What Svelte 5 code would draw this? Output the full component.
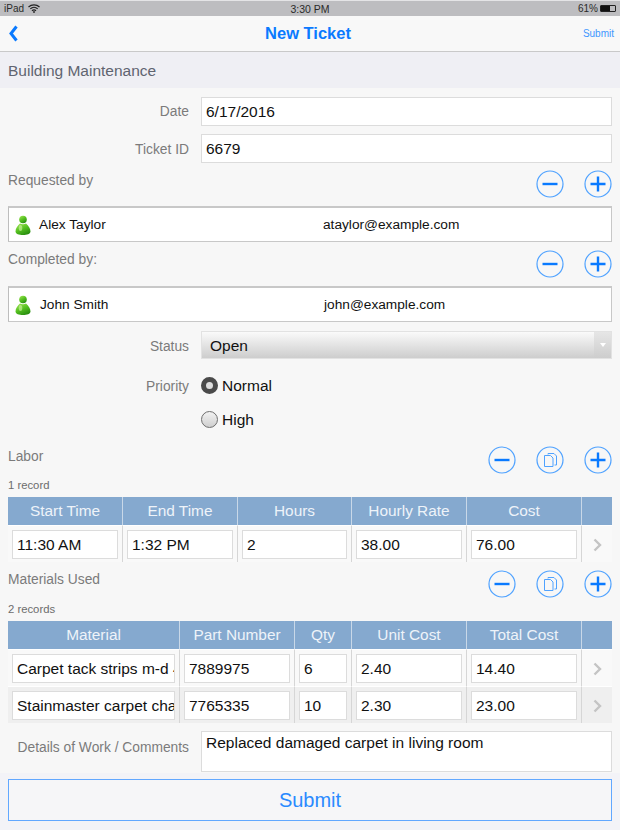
<script>
	const labor = [["11:30 AM", "1:32 PM", "2", "38.00", "76.00"]];
	const laborCols = ["Start Time", "End Time", "Hours", "Hourly Rate", "Cost"];
	const materials = [
		["Carpet tack strips m-d 4", "7889975", "6", "2.40", "14.40"],
		["Stainmaster carpet cha", "7765335", "10", "2.30", "23.00"]
	];
	const materialCols = ["Material", "Part Number", "Qty", "Unit Cost", "Total Cost"];
</script>

{#snippet minus()}
	<svg class="round" viewBox="0 0 28 28"><circle cx="14" cy="14" r="13" /><path d="M6.500 14h15" class="bar" /></svg>
{/snippet}
{#snippet plus()}
	<svg class="round" viewBox="0 0 28 28"><circle cx="14" cy="14" r="13" /><path d="M6.500 14h15M14 6.500v15" class="bar" /></svg>
{/snippet}
{#snippet copy()}
	<svg class="round" viewBox="0 0 28 28">
		<circle cx="14" cy="14" r="13" />
		<path d="M12 8.500V7.500h6l2.500 2.500v9h-2" class="thin" />
		<path d="M8.500 9.500h6l2.500 2.500v8.500h-8.500z" class="thin" />
	</svg>
{/snippet}
{#snippet person()}
	<svg class="person" viewBox="0 0 16 20">
		<defs>
			<linearGradient id="grn" x1="0" y1="0" x2="0.600" y2="1">
				<stop offset="0" stop-color="#a6e85a" />
				<stop offset="0.550" stop-color="#55c020" />
				<stop offset="1" stop-color="#2a8f10" />
			</linearGradient>
		</defs>
		<circle cx="8" cy="4.500" r="3.800" fill="url(#grn)" />
		<path d="M5 8.500C6.500 9.500 9.500 9.500 11 8.500C13.500 10.500 15.500 13.500 15.500 16.500C15.500 19 12 20 8 20C4 20 .5 19 .5 16.500C.5 13.500 2.500 10.500 5 8.500z" fill="url(#grn)" />
		<ellipse cx="5.500" cy="13" rx="1.800" ry="3" fill="#d4f5a8" opacity="0.600" />
	</svg>
{/snippet}
{#snippet chevron()}
	<svg class="chev" viewBox="0 0 9 14"><path d="M1.500 1.500L7 7l-5.500 5.500" /></svg>
{/snippet}

<div class="page">
	<div class="status">
		<span class="st-left">
			iPad
			<svg class="wifi" viewBox="0 0 12 9"><path d="M.5 3a8 8 0 0 1 11 0M2.300 4.900a5.400 5.400 0 0 1 7.400 0M4 6.700a3 3 0 0 1 4 0" /><circle cx="6" cy="8" r=".9" /></svg>
		</span>
		<span class="st-time">3:30 PM</span>
		<span class="st-right">
			61%
			<span class="battery"><span class="level"></span></span>
		</span>
	</div>

	<div class="nav">
		<svg class="back" viewBox="0 0 11 17"><path d="M8.500 1.500L3 8.500l5.500 7" /></svg>
		<span class="nav-title">New Ticket</span>
		<span class="nav-submit">Submit</span>
	</div>

	<div class="section">Building Maintenance</div>

	<div class="form">
		<div class="field f-date">
			<span class="lbl">Date</span>
			<div class="input">6/17/2016</div>
		</div>
		<div class="field f-ticket">
			<span class="lbl">Ticket ID</span>
			<div class="input">6679</div>
		</div>

		<div class="head h-req">
			<span class="cap">Requested by</span>
			<div class="btns">{@render minus()}{@render plus()}</div>
		</div>
		<div class="contact">
			{@render person()}
			<span class="c-name">Alex Taylor</span>
			<span class="c-mail">ataylor@example.com</span>
		</div>

		<div class="head h-comp">
			<span class="cap">Completed by:</span>
			<div class="btns">{@render minus()}{@render plus()}</div>
		</div>
		<div class="contact second">
			{@render person()}
			<span class="c-name">John Smith</span>
			<span class="c-mail">john@example.com</span>
		</div>

		<div class="field f-status">
			<span class="lbl">Status</span>
			<div class="select">
				<span class="sel-text">Open</span>
				<span class="arrow"><i></i></span>
			</div>
		</div>
		<div class="field f-normal">
			<span class="lbl">Priority</span>
			<div class="radio"><span class="dot on"></span>Normal</div>
		</div>
		<div class="field f-high">
			<span class="lbl"></span>
			<div class="radio"><span class="dot"></span>High</div>
		</div>

		<div class="head h-labor">
			<span class="cap">Labor</span>
			<div class="btns">{@render minus()}{@render copy()}{@render plus()}</div>
		</div>
		<div class="count">1 record</div>
		<div class="table labor">
			{#each laborCols as c}<div class="th">{c}</div>{/each}
			<div class="th"></div>
			{#each labor as row}
				{#each row as v}<div class="td"><div class="cell">{v}</div></div>{/each}
				<div class="td end">{@render chevron()}</div>
			{/each}
		</div>

		<div class="head h-mat">
			<span class="cap">Materials Used</span>
			<div class="btns">{@render minus()}{@render copy()}{@render plus()}</div>
		</div>
		<div class="count">2 records</div>
		<div class="table mats">
			{#each materialCols as c}<div class="th">{c}</div>{/each}
			<div class="th"></div>
			{#each materials as row, i}
				{#each row as v}<div class="td" class:alt={i == 1}><div class="cell">{v}</div></div>{/each}
				<div class="td end" class:alt={i == 1}>{@render chevron()}</div>
			{/each}
		</div>

		<div class="field f-notes">
			<span class="lbl">Details of Work / Comments</span>
			<div class="input notes">Replaced damaged carpet in living room</div>
		</div>
	</div>

	<div class="footer">
		<div class="submit">Submit</div>
	</div>
</div>

<style>
	:global(body) {
		margin: 0;
		background: #f7f7f7;
	}

	.page {
		width: 620px;
		height: 830px;
		overflow: hidden;
		font-family: "Liberation Sans", Arial, sans-serif;
		color: #111;
		background: #f7f7f7;
	}

	.status {
		height: 16px;
		background: #bdbdc0;
		border-top: 1px solid #e4e4e6;
		box-sizing: border-box;
		display: grid;
		grid-template-columns: 1fr auto 1fr;
		align-items: center;
		padding: 0 4px;
		font-size: 10px;
		color: #2a2a2a;
	}
	.st-left {
		display: flex;
		align-items: center;
		gap: 4px;
	}
	.wifi {
		width: 12px;
		height: 9px;
		fill: #222;
	}
	.wifi path {
		fill: none;
		stroke: #222;
		stroke-width: 1.200;
	}
	.st-time {
		font-size: 10.500px;
	}
	.st-right {
		display: flex;
		justify-content: flex-end;
		align-items: center;
		gap: 2px;
	}
	.battery {
		width: 16px;
		height: 7px;
		border: 1px solid #222;
		border-radius: 1px;
		box-sizing: border-box;
		display: block;
	}
	.level {
		display: block;
		width: 61%;
		height: 100%;
		background: #111;
	}

	.nav {
		height: 36px;
		background: #f8f8f8;
		border-bottom: 1px solid #c9c9c9;
		box-sizing: border-box;
		display: grid;
		grid-template-columns: 1fr auto 1fr;
		align-items: center;
		padding: 0 8px 0 4px;
	}
	.back {
		width: 11px;
		height: 17px;
		margin-left: 4px;
		fill: none;
		stroke: #0a7aff;
		stroke-width: 3;
	}
	.nav-title {
		color: #0a7aff;
		font-size: 16.500px;
		font-weight: bold;
	}
	.nav-submit {
		color: #3f97ff;
		font-size: 10px;
		justify-self: end;
		margin-right: -2px;
	}

	.section {
		height: 36px;
		background: #efeff4;
		line-height: 37px;
		padding-left: 8px;
		font-size: 15.500px;
		color: #5f6470;
	}

	.form {
		height: 685px;
		padding: 9px 8px 0;
		box-sizing: border-box;
	}

	.field {
		display: flex;
		align-items: center;
		gap: 12px;
	}
	.lbl {
		width: 181px;
		flex: none;
		text-align: right;
		font-size: 13.800px;
		color: #7b7b7b;
	}
	.input {
		flex: 1;
		height: 29px;
		box-sizing: border-box;
		background: #fff;
		border: 1px solid #dcdcdc;
		font-size: 15.500px;
		line-height: 27px;
		padding-left: 4px;
	}
	.f-ticket {
		margin-top: 8px;
	}
	.f-ticket .lbl {
		margin-top: 2px;
	}

	.head {
		display: flex;
		justify-content: space-between;
		align-items: flex-start;
		height: 28px;
	}
	.cap {
		font-size: 13.800px;
		color: #7b7b7b;
		margin-top: 2px;
	}
	.h-req {
		margin-top: 7px;
	}
	.h-req .cap {
		margin-top: 3px;
	}
	.h-comp {
		margin-top: 8px;
	}
	.h-labor {
		margin-top: 18px;
	}
	.h-mat {
		margin-top: 8px;
	}
	.h-labor .cap {
		margin-top: 3px;
	}
	.btns {
		display: flex;
		gap: 20px;
	}
	.round {
		width: 28px;
		height: 28px;
		display: block;
	}
	.round circle {
		fill: none;
		stroke: #4fa2ff;
		stroke-width: 1.200;
	}
	.bar {
		fill: none;
		stroke: #0a7aff;
		stroke-width: 2.400;
	}
	.thin {
		fill: none;
		stroke: #4fa2ff;
		stroke-width: 1;
	}

	.contact {
		height: 36px;
		margin-top: 8px;
		box-sizing: border-box;
		background: #fff;
		border: 1px solid #c8c8c8;
		border-top-width: 2px;
		border-left-color: #bdbdbd;
		display: flex;
		align-items: center;
		padding-left: 6px;
		font-size: 13.700px;
	}
	.person {
		width: 16px;
		height: 20px;
		flex: none;
	}
	.c-name {
		width: 284px;
		flex: none;
		margin-left: 8px;
	}
	.second .c-name {
		margin-left: 9px;
	}

	.f-status {
		margin-top: 9px;
	}
	.f-status .lbl {
		margin-top: 2px;
	}
	.select {
		flex: 1;
		height: 28px;
		box-sizing: border-box;
		display: flex;
		justify-content: space-between;
		align-items: center;
		padding-left: 8px;
		font-size: 15.500px;
		background: linear-gradient(#fafafa, #cdcdcd);
		border: 1px solid #e2e2e2;
	}
	.sel-text {
		padding-top: 2px;
	}
	.arrow {
		width: 17px;
		height: 100%;
		background: linear-gradient(#e6e6e6, #cdcdcd);
		display: flex;
		align-items: center;
		justify-content: center;
	}
	.arrow i {
		border: 3px solid transparent;
		border-top: 4px solid #fff;
		border-bottom: 0;
	}

	.f-normal {
		height: 18px;
		margin-top: 17px;
	}
	.f-normal .lbl {
		margin-top: 2px;
	}
	.f-high {
		height: 18px;
		margin-top: 16px;
	}
	.radio {
		display: flex;
		align-items: center;
		gap: 4px;
		font-size: 15.500px;
		padding-top: 1px;
	}
	.dot {
		width: 17px;
		height: 17px;
		border-radius: 50%;
		box-sizing: border-box;
		border: 1px solid #6f6f6f;
		background: linear-gradient(#f2f2f2, #cfcfcf);
	}
	.dot.on {
		border: 5px solid #4a4a4a;
		background: #dedede;
	}

	.count {
		font-size: 11.300px;
		color: #6c6c6c;
		height: 13px;
		line-height: 13px;
		margin-top: 5px;
		margin-bottom: 5px;
	}

	.table {
		display: grid;
		width: 604px;
	}
	.labor {
		grid-template-columns: 115px 115px 114px 115px 115px 30px;
	}
	.mats {
		grid-template-columns: 172px 115px 57px 115px 115px 30px;
	}
	.th {
		height: 28px;
		line-height: 28px;
		background: #85a9cf;
		color: #eef3f9;
		text-align: center;
		font-size: 15.400px;
		border-right: 1px solid #c9d8e8;
		box-sizing: border-box;
	}
	.th:nth-child(6) {
		border-right: 0;
	}
	.td {
		height: 37px;
		box-sizing: border-box;
		padding: 4px 4px 3px;
		border-right: 1px solid #d6d6d6;
		border-top: 1px solid #fff;
		background: #f9f9f9;
	}
	.td.alt {
		background: #efefef;
	}
	.td.end {
		border-right: 0;
		display: flex;
		align-items: center;
		justify-content: center;
	}
	.cell {
		height: 29px;
		box-sizing: border-box;
		background: #fff;
		border: 1px solid #dcdcdc;
		font-size: 15.500px;
		line-height: 27px;
		padding-left: 4px;
		white-space: nowrap;
		overflow: hidden;
	}
	.chev {
		width: 9px;
		height: 14px;
		fill: none;
		stroke: #c4c4c4;
		stroke-width: 2.400;
	}

	.f-notes {
		margin-top: 8px;
		align-items: flex-start;
	}
	.f-notes .lbl {
		margin-top: 9px;
		white-space: nowrap;
	}
	.notes {
		height: 41px;
		line-height: 22px;
	}

	.footer {
		height: 57px;
		background: #f3f3f7;
		padding: 6px 8px 0;
		box-sizing: border-box;
	}
	.submit {
		height: 42px;
		box-sizing: border-box;
		background: #f6f6f8;
		border: 1px solid #62a8ff;
		color: #2a8aff;
		text-align: center;
		font-size: 20px;
		line-height: 40px;
	}
</style>
